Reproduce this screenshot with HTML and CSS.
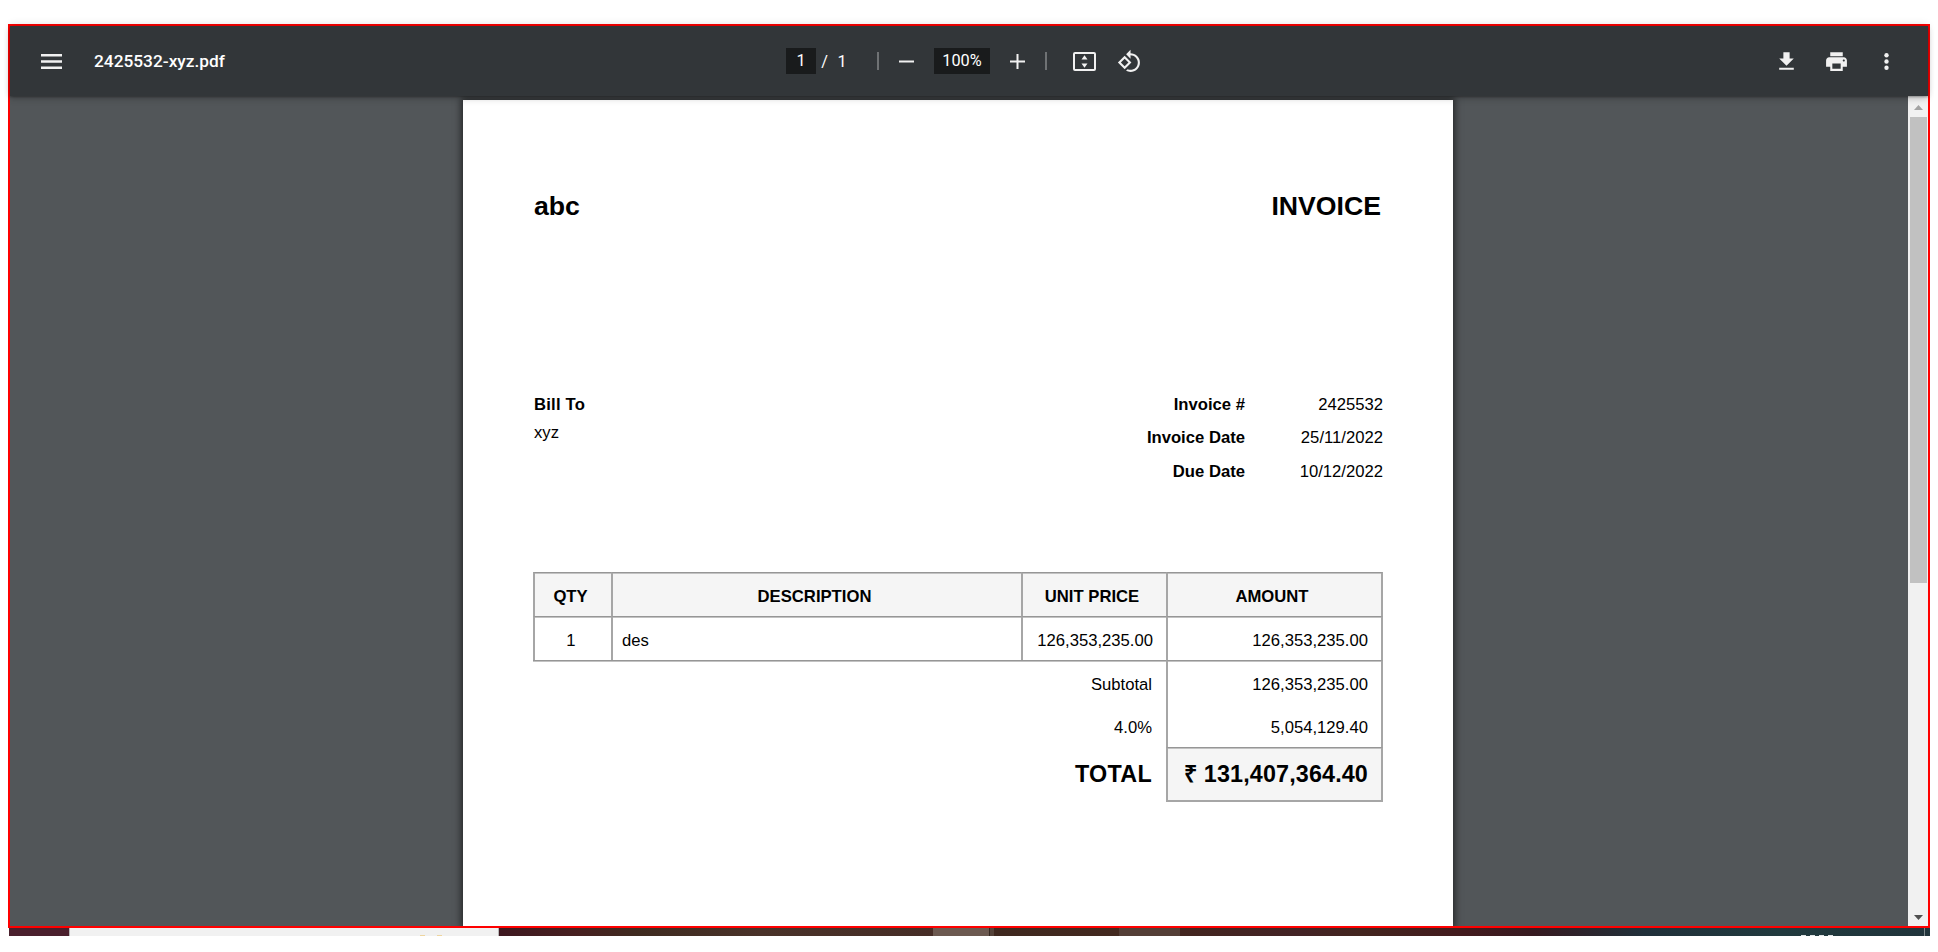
FILE: index.html
```html
<!DOCTYPE html>
<html lang="en">
<head>
<meta charset="utf-8">
<title>2425532-xyz.pdf</title>
<link rel="stylesheet" href="styles.css">
</head>
<body>
<main class="viewer">
  <header class="toolbar">
    <div class="tb-left">
      <svg class="icon-menu" viewBox="0 0 21 15"><path d="M0 0h21v2.5H0zM0 6.2h21v2.5H0zM0 12.5h21V15H0z"/></svg>
      <span class="filename">2425532-xyz.pdf</span>
    </div>
    <div class="tb-center">
      <span class="field page-field">1</span>
      <span class="slash">/</span>
      <span class="count">1</span>
      <i class="sep sep-first"></i>
      <svg class="icon-step" viewBox="0 0 15 15"><path d="M0 6.5h15v2H0z"/></svg>
      <span class="field zoom-field">100%</span>
      <svg class="icon-step" viewBox="0 0 15 15"><path d="M0 6.5h6.5V0h2v6.5H15v2H8.500V15h-2V8.500H0z"/></svg>
      <i class="sep sep-second"></i>
      <svg class="icon-fit" viewBox="0 0 23 19"><path fill-rule="evenodd" d="M2 0h19a2 2 0 0 1 2 2v15a2 2 0 0 1-2 2H2a2 2 0 0 1-2-2V2a2 2 0 0 1 2-2zm0 2v15h19V2zM11.500 3.300l3 4.200h-6zM11.500 15.700l3-4.200h-6z"/></svg>
      <svg class="icon icon-rotate" viewBox="0 0 24 24"><path d="M7.340 6.410L.860 12.900l6.490 6.480 6.490-6.480-6.500-6.490zM3.690 12.900l3.660-3.660L11 12.900l-3.660 3.660-3.650-3.660zm15.670-6.260C17.610 4.880 15.300 4 13 4V.760L8.760 5 13 9.240V6c1.790 0 3.580.680 4.950 2.050 2.730 2.730 2.730 7.170 0 9.900C16.580 19.320 14.790 20 13 20c-.970 0-1.940-.210-2.840-.610l-1.490 1.490C10.020 21.620 11.510 22 13 22c2.300 0 4.610-.880 6.360-2.640 3.520-3.510 3.520-9.210 0-12.720z"/></svg>
    </div>
    <div class="tb-right">
      <svg class="icon" viewBox="0 0 24 24"><path d="M19 9h-4V3H9v6H5l7 7 7-7zM5 18v2h14v-2H5z"/></svg>
      <svg class="icon" viewBox="0 0 24 24"><path d="M19 8H5c-1.660 0-3 1.340-3 3v6h4v4h12v-4h4v-6c0-1.660-1.340-3-3-3zm-3 11H8v-5h8v5zm3-7c-.550 0-1-.450-1-1s.450-1 1-1 1 .450 1 1-.450 1-1 1zm-1-9H6v4h12V3z"/></svg>
      <svg class="icon" viewBox="0 0 24 24"><circle cx="12" cy="6" r="2.100"/><circle cx="12" cy="12" r="2.100"/><circle cx="12" cy="18" r="2.100"/></svg>
    </div>
  </header>
  <div class="body">
    <div class="canvas">
      <article class="page">
        <div class="title-row"><span>abc</span><span>INVOICE</span></div>
        <div class="info-row">
          <div class="bill"><b>Bill To</b><span>xyz</span></div>
          <div class="meta">
            <b>Invoice #</b><span>2425532</span>
            <b>Invoice Date</b><span>25/11/2022</span>
            <b>Due Date</b><span>10/12/2022</span>
          </div>
        </div>
        <div class="items">
          <div class="cell head">QTY</div><div class="cell head">DESCRIPTION</div><div class="cell head">UNIT PRICE</div><div class="cell head last">AMOUNT</div>
          <div class="cell mid">1</div><div class="cell desc">des</div><div class="cell num">126,353,235.00</div><div class="cell num last">126,353,235.00</div>
          <div class="label under">Subtotal</div><div class="cell num last">126,353,235.00</div>
          <div class="label tax">4.0%</div><div class="cell num last plain">5,054,129.40</div>
          <div class="label total">TOTAL</div><div class="cell num last total grand">₹ 131,407,364.40</div>
        </div>
      </article>
    </div>
    <div class="scrollbar">
      <svg class="arrow up" viewBox="0 0 9 5"><path d="M0 5L4.500 0 9 5z"/></svg>
      <div class="thumb"></div>
      <svg class="arrow down" viewBox="0 0 9 5"><path d="M0 0h9L4.500 5z"/></svg>
    </div>
  </div>
</main>
<footer class="taskbar">
  <div class="start"></div>
  <div class="search"><i></i><i></i></div>
  <div class="wall-a"></div>
  <div class="task-active"></div>
  <div class="task-edge"></div>
  <div class="wall-b"></div>
  <div class="task-open"></div>
  <div class="wall-c"><span class="clock"><i></i><i></i><i></i><i></i></span><i class="peek"></i></div>
</footer>
</body>
</html>
```

FILE: styles.css
```css
* { box-sizing: border-box; }
body { margin: 0; height: 952px; padding: 24px 8px 0; background: #fff; overflow: hidden; }
svg { display: block; flex: none; fill: #f1f1f1; }

.viewer { display: flex; flex-direction: column; height: 904px; border: 2px solid #f00; background: #525659; }

.toolbar {
  position: relative; z-index: 1; flex: none; height: 70px;
  display: grid; grid-template-columns: 776px 1fr 154px; align-items: center;
  background: #323639; color: #fff; font: 16.3px Roboto, sans-serif;
  box-shadow: 0 -2px 8px rgba(0,0,0,.09), 0 4px 8px rgba(0,0,0,.06), 0 1px 2px rgba(0,0,0,.3), 0 2px 6px rgba(0,0,0,.15);
}
.tb-left, .tb-center, .tb-right { display: flex; align-items: center; height: 70px; }
.icon { width: 25px; height: 25px; }
.icon-menu { width: 21px; height: 15px; margin-left: 31px; }
.filename { margin-left: 32px; font-weight: 500; font-size: 17.3px; }
.field { height: 26px; line-height: 25px; background: #191b1c; text-align: center; }
.page-field { width: 30px; }
.slash { width: 7px; margin-left: 5px; text-align: center; }
.count { width: 10px; margin-left: 9px; text-align: center; }
.sep { width: 2px; height: 18px; background: #6f7274; }
.sep-first { margin-left: 30px; margin-right: 20px; }
.icon-step { width: 15px; height: 15px; }
.zoom-field { width: 56px; margin: 0 20px; }
.sep-second { margin-left: 20px; margin-right: 26px; }
.icon-fit { width: 23px; height: 19px; }
.icon-rotate { margin-left: 21px; }
.tb-right { gap: 25px; }

.body { flex: 1; min-height: 0; display: flex; }
.canvas { flex: 1; padding: 4px 0 0 453px; overflow: hidden; }
.page {
  width: 990px; height: 826px; padding: 90px 70px 0 70px; background: #fff; color: #000;
  font: 16.67px/20px "Liberation Sans", Arial, sans-serif; box-shadow: 0 0 7px 2px rgba(0,0,0,.55);
}
.title-row { display: flex; justify-content: space-between; height: 195px; padding: 0 2px 0 1px; line-height: 32px; font-size: 26.67px; font-weight: bold; }
.info-row { display: flex; justify-content: space-between; height: 187px; padding: 10px 0 0 1px; }
.bill { display: flex; flex-direction: column; gap: 8px; }
.bill b { letter-spacing: .2px; }
.meta { display: grid; grid-template-columns: 110px 138px; grid-auto-rows: 33.4px; text-align: right; }

.items { display: grid; grid-template-columns: 78px 410px 145px 217px; grid-template-rows: 44px 44px 43px 44px 55px; }
.cell {
  padding-top: 14px; border-top: 1px solid #969696; border-left: 2px solid #a6a6a6;
  box-shadow: inset 0 1px #c2c2c2;
}
.last { border-right: 2px solid #a6a6a6; }
.head { padding-right: 5px; background: #f5f5f5; font-weight: bold; text-align: center; }
.mid { padding-right: 4px; text-align: center; }
.desc { padding-left: 9px; }
.num { padding-right: 13px; text-align: right; }
.label { grid-column: 1 / 4; padding: 15px 14px 0 0; text-align: right; }
.under { border-top: 1px solid #969696; box-shadow: inset 0 1px #c2c2c2; padding-top: 14px; }
.plain { border-top: 0; box-shadow: none; padding-top: 15px; }
.total { font-size: 23.33px; line-height: 28px; font-weight: bold; letter-spacing: .14px; }
.label.total { padding-top: 13px; letter-spacing: .3px; }
.grand { padding-top: 12px; border-bottom: 2px solid #a6a6a6; background: #f5f5f5; }

.scrollbar { width: 20px; display: flex; flex-direction: column; align-items: center; background: #f1f1f1; }
.arrow { width: 9px; height: 5px; }
.up { margin: 9px 0 7px; fill: #a3a3a3; }
.thumb { width: 17px; height: 466px; background: #c1c1c1; }
.down { margin: auto 0 6px; fill: #505050; }

.taskbar { display: flex; height: 8px; margin: 0 0 0 1px; }
.start { width: 60px; background: #4b202d; }
.search { width: 430px; display: flex; gap: 12px; padding: 7px 0 0 350px; background: #f1f1f1; border-left: 1px solid #b8b8b8; border-right: 1px solid #b8b8b8; }
.search i { width: 5px; height: 1px; background: #eed59f; }
.wall-a { width: 434px; background: linear-gradient(90deg, #3e1820, #472020 18%, #3f2b20 32%, #493229 60%, #462d26); }
.task-active { width: 56px; background: #6c5950; }
.task-edge { width: 5px; background: #544239; border-left: 1px solid #352720; }
.wall-b { width: 125px; background: linear-gradient(90deg, #3f281f, #43291f); }
.task-open { width: 61px; background: #543e36; }
.wall-c { flex: 1; display: flex; justify-content: flex-end; background: linear-gradient(90deg, #43251f, #432325 16%, #43251f 24%, #431b1e 38%, #371a20 47%, #20303a 62%, #213a3e 80%, #20343b); }
.clock { display: flex; gap: 4px; padding: 7px 91px 0 0; }
.clock i { width: 5px; height: 1px; background: #e0e4e5; }
.peek { width: 1px; margin-right: 5px; background: #7c878a; }
```
